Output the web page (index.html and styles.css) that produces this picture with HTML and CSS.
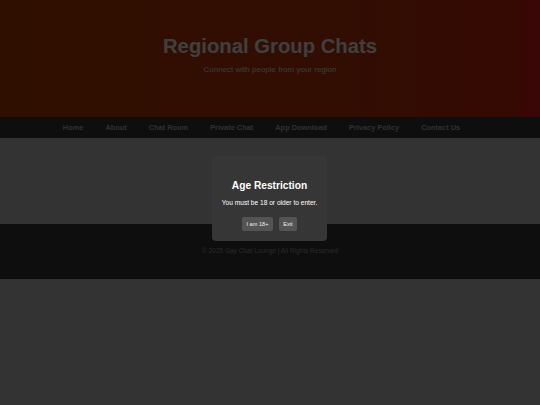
FILE: index.html
```html
<!DOCTYPE html>
<html lang="en">
<head>
<meta charset="utf-8">
<title>Regional Group Chats</title>
<link rel="stylesheet" href="styles.css">
</head>
<body>
<header class="hero">
  <h1 class="hero-title">Regional Group Chats</h1>
  <p class="hero-sub">Connect with people from your region</p>
</header>
<nav class="nav">
  <ul class="nav-list">
    <li><a href="#">Home</a></li>
    <li><a href="#">About</a></li>
    <li><a href="#">Chat Room</a></li>
    <li><a href="#">Private Chat</a></li>
    <li><a href="#">App Download</a></li>
    <li><a href="#">Privacy Policy</a></li>
    <li><a href="#">Contact Us</a></li>
  </ul>
</nav>
<main class="main"></main>
<footer class="footer">
  <p>© 2025 Gay Chat Lounge | All Rights Reserved</p>
</footer>
<div class="overlay"></div>
<div class="modal">
  <h2 class="modal-title">Age Restriction</h2>
  <p class="modal-text">You must be 18 or older to enter.</p>
  <div class="modal-actions">
    <button class="btn">I am 18+</button>
    <button class="btn">Exit</button>
  </div>
</div>
</body>
</html>
```
FILE: styles.css
```css
html, body {
  margin: 0;
  padding: 0;
}
body {
  background: #cccccc;
  font-family: "Liberation Sans", Arial, sans-serif;
  height: 405px;
  overflow: hidden;
}
.hero {
  height: 117px;
  box-sizing: border-box;
  padding-top: 34px;
  text-align: center;
  background: linear-gradient(to right, #bc4000 0%, #c63608 60%, #d02808 96%, #e81818 97.5%, #e81818 100%);
}
.hero-title {
  margin: 0;
  font-size: 20.3px;
  line-height: 24px;
  font-weight: bold;
  color: #fafafa;
}
.hero-sub {
  margin: 7px 0 0;
  font-size: 8px;
  line-height: 10px;
  color: #e4e4e4;
}
.nav {
  background: #383838;
  height: 21px;
}
.nav-list {
  list-style: none;
  margin: 0;
  padding: 0 17px 0 0;
  height: 21px;
  display: flex;
  justify-content: center;
  align-items: center;
  gap: 22px;
  font-size: 7.4px;
  line-height: 9px;
}
.nav-list a {
  color: #bcbcbc;
  text-decoration: none;
  font-weight: bold;
}
.main {
  height: 86px;
  background: #cccccc;
}
.footer {
  height: 55px;
  background: #383838;
  display: flex;
  justify-content: center;
  box-sizing: border-box;
  padding-top: 23px;
}
.footer p {
  margin: 0;
  font-size: 6.5px;
  line-height: 8px;
  color: #a4a4a4;
}
.overlay {
  position: fixed;
  inset: 0;
  background: rgba(0, 0, 0, 0.75);
}
.modal {
  position: fixed;
  left: 212px;
  top: 156px;
  width: 115px;
  height: 85px;
  box-sizing: border-box;
  background: #363636;
  border-radius: 4px;
  text-align: center;
  padding-top: 24px;
}
.modal-title {
  margin: 0;
  font-size: 10.2px;
  line-height: 12px;
  font-weight: bold;
  color: #ffffff;
}
.modal-text {
  margin: 7px 0 0;
  font-size: 6.6px;
  line-height: 8px;
  color: #ffffff;
}
.modal-actions {
  margin-top: 10px;
  display: flex;
  justify-content: center;
  gap: 6px;
}
.btn {
  font-family: inherit;
  font-size: 5.6px;
  font-weight: normal;
  line-height: 6px;
  padding: 4px 4.4px;
  border: none;
  border-radius: 2px;
  background: #545454;
  color: #f0f0f0;
}
```
